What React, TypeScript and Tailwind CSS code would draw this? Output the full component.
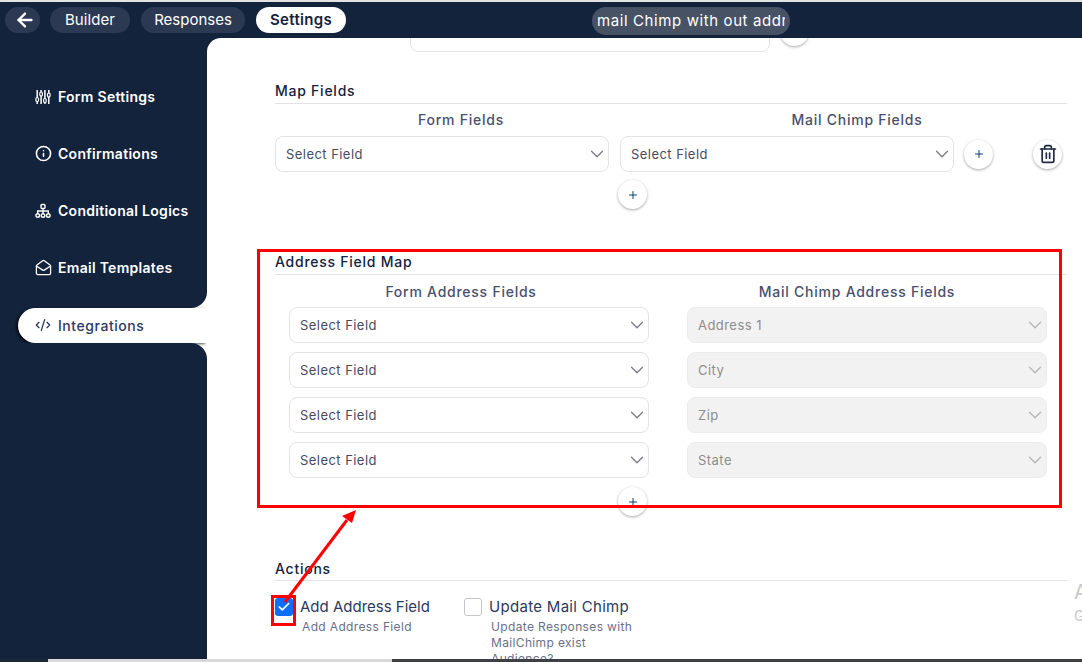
import { ArrowLeft, ChevronDown, Check, CodeXml, Info, MailOpen, Plus, Trash2 } from "lucide-react";

const font = "[font-family:Inter,'Liberation_Sans',sans-serif]";

function SlidersIcon() {
  return (
    <svg viewBox="0 0 16 16" className="h-[16px] w-[16px]" fill="none" stroke="currentColor" strokeWidth="1.5">
      <path d="M2.2 1v14M6.1 1v14M9.9 1v14M13.8 1v14" />
      <rect x="0.9" y="8.5" width="2.6" height="4" rx="1.3" fill="#14233c" strokeWidth="1.2" />
      <rect x="4.8" y="3" width="2.6" height="4" rx="1.3" fill="#14233c" strokeWidth="1.2" />
      <rect x="8.6" y="9.5" width="2.6" height="4" rx="1.3" fill="#14233c" strokeWidth="1.2" />
      <rect x="12.5" y="4" width="2.6" height="4" rx="1.3" fill="#14233c" strokeWidth="1.2" />
    </svg>
  );
}

function TreeIcon() {
  return (
    <svg viewBox="0 0 16 16" className="h-[16px] w-[16px]" fill="none" stroke="currentColor" strokeWidth="1.4">
      <rect x="6" y="1.5" width="4" height="4" rx="1" />
      <path d="M8 5.5v5M2.7 10.5V8h10.6v2.5" />
      <circle cx="2.7" cy="12.5" r="1.8" />
      <circle cx="8" cy="12.5" r="1.8" />
      <circle cx="13.3" cy="12.5" r="1.8" />
    </svg>
  );
}

function NavItem({ icon, label }: { icon: React.ReactNode; label: string }) {
  return (
    <div className="flex h-[57px] items-center gap-[7px] pl-[35px] text-[14px] font-semibold tracking-[0.28px] text-white">
      <span className="grid w-[16px] place-items-center">{icon}</span>
      {label}
    </div>
  );
}

function SelectBox({ label, disabled, className }: { label: string; disabled?: boolean; className?: string }) {
  return (
    <div
      className={`flex h-[36px] items-center justify-between rounded-[8px] border pl-[10px] text-[13px] tracking-[0.45px] ${
        disabled ? "border-[#ececec] bg-[#f2f2f2] text-[#8d8d8d]" : "border-[#e3e3e6] bg-white text-[#4a4a5e]"
      } ${className ?? ""}`}
    >
      <span className="pt-[2px]">{label}</span>
      <ChevronDown className={`h-[22px] w-[22px] ${disabled ? "text-[#b5b5b5]" : "text-[#7b7b85]"}`} strokeWidth={1.4} />
    </div>
  );
}

function RoundButton({ children, className }: { children: React.ReactNode; className?: string }) {
  return (
    <div className={`grid h-[29px] w-[29px] shrink-0 place-items-center rounded-full bg-white shadow-[0_1px_3px_rgba(0,0,0,0.35)] ${className ?? ""}`}>
      {children}
    </div>
  );
}

const plusIcon = <Plus className="h-[12px] w-[12px] text-[#0b3f6e]" strokeWidth={2} />;

function SectionTitle({ children }: { children: React.ReactNode }) {
  return (
    <h3 className="border-b border-[#e3e3e6] pb-[3px] text-[14px] leading-[18px] font-medium tracking-[0.75px] text-[#14233c]">
      {children}
    </h3>
  );
}

function ColumnTitles({ left, right }: { left: string; right: string }) {
  return (
    <div className="grid grid-cols-[372px_420px] text-center text-[14px] leading-[18px] font-medium tracking-[0.75px] text-[#4a4f6e]">
      <div>{left}</div>
      <div>{right}</div>
    </div>
  );
}

export default function App() {
  return (
    <div className={`relative flex h-[662px] w-[1082px] flex-col overflow-hidden bg-white ${font}`}>
      <div className="h-[2px] bg-[#e4e4e4]" />

      {/* top bar */}
      <header className="relative z-10 flex h-[36px] shrink-0 items-start bg-[#14233c] pt-[5px] pl-[5px] text-[15px]">
        <div className="grid h-[26px] w-[35px] place-items-center rounded-full bg-[#2b3a52] pl-[4px] text-white">
          <ArrowLeft className="h-[22px] w-[22px]" strokeWidth={2.6} />
        </div>
        <div className="ml-[10px] flex h-[26px] w-[80px] items-center justify-center rounded-full bg-[#2b3a52] tracking-[0.1px] text-white">Builder</div>
        <div className="ml-[11px] flex h-[26px] w-[104px] items-center justify-center rounded-full bg-[#2b3a52] tracking-[0px] text-white">Responses</div>
        <div className="ml-[11px] flex h-[26px] w-[90px] items-center justify-center rounded-full bg-white font-semibold tracking-[0.3px] text-[#14233c]">Settings</div>
        <div className="ml-[246px] flex h-[28px] w-[198px] items-center overflow-hidden rounded-full bg-[#475264] px-[5px] pt-[1px] text-[15px] tracking-[0.6px] whitespace-nowrap text-white">
          <span className="block overflow-hidden">mail Chimp with out address</span>
        </div>
      </header>

      <div className="flex min-h-0 flex-1">
        {/* sidebar */}
        <aside className="flex w-[207px] shrink-0 flex-col bg-white">
          <div className="h-[270px] rounded-br-[16px] bg-[#14233c] pt-[30px]">
            <NavItem icon={<SlidersIcon />} label="Form Settings" />
            <NavItem icon={<Info className="h-[17px] w-[17px]" strokeWidth={2.2} />} label="Confirmations" />
            <NavItem icon={<TreeIcon />} label="Conditional Logics" />
            <NavItem icon={<MailOpen className="h-[17px] w-[17px]" strokeWidth={1.8} />} label="Email Templates" />
          </div>
          <div className="bg-[#14233c] pl-[18px]">
            <div className="flex h-[35px] items-center gap-[7px] rounded-l-full bg-white pb-[1px] pl-[17px] text-[14px] font-medium tracking-[0.55px] text-[#2c3a5e] shadow-[-2px_1px_3px_rgba(0,0,0,0.7)]">
              <span className="grid w-[16px] place-items-center">
                <CodeXml className="h-[16px] w-[16px]" strokeWidth={2} />
              </span>
              Integrations
            </div>
          </div>
          <div className="flex-1 rounded-tr-[16px] bg-[#14233c]" />
        </aside>

        {/* main panel */}
        <div className="min-w-0 flex-1 bg-[#14233c]">
          <main className="h-full overflow-hidden rounded-tl-[14px] bg-white pr-[15px] pl-[68px]">
            <div className="-mt-[22px] flex items-start pl-[135px]">
              <div className="h-[36px] w-[360px] rounded-[8px] border border-[#e3e3e6] bg-white" />
              <RoundButton className="mt-[1px] ml-[10px]">{plusIcon}</RoundButton>
            </div>

            <section className="mt-[30px]">
              <SectionTitle>Map Fields</SectionTitle>
              <div className="mt-[7px]">
                <ColumnTitles left="Form Fields" right="Mail Chimp Fields" />
              </div>
              <div className="mt-[7px] flex items-center">
                <SelectBox label="Select Field" className="w-[334px]" />
                <SelectBox label="Select Field" className="ml-[11px] w-[334px]" />
                <RoundButton className="ml-[10px]">{plusIcon}</RoundButton>
                <RoundButton className="ml-[40px]">
                  <Trash2 className="h-[20px] w-[20px] text-[#1f2a44]" strokeWidth={2} />
                </RoundButton>
              </div>
              <div className="mt-[8px] pl-[343px]">
                <RoundButton>{plusIcon}</RoundButton>
              </div>
            </section>

            <section className="mt-[44px]">
              <SectionTitle>Address Field Map</SectionTitle>
              <div className="mt-[8px]">
                <ColumnTitles left="Form Address Fields" right="Mail Chimp Address Fields" />
              </div>
              <div className="mt-[6px] grid grid-cols-[360px_360px] gap-x-[38px] gap-y-[9px] pl-[14px]">
                <SelectBox label="Select Field" />
                <SelectBox label="Address 1" disabled />
                <SelectBox label="Select Field" />
                <SelectBox label="City" disabled />
                <SelectBox label="Select Field" />
                <SelectBox label="Zip" disabled />
                <SelectBox label="Select Field" />
                <SelectBox label="State" disabled />
              </div>
              <div className="mt-[9px] pl-[343px]">
                <RoundButton>{plusIcon}</RoundButton>
              </div>
            </section>

            <section className="mt-[44px]">
              <h3 className="border-b border-[#e3e3e6] pb-[2px] text-[14px] leading-[18px] font-medium tracking-[0.75px] text-[#14233c]">Actions</h3>
              <div className="mt-[17px] flex items-start">
                <div className="grid h-[18px] w-[18px] shrink-0 place-items-center rounded-[3px] bg-[#0d6efd]">
                  <Check className="h-[14px] w-[14px] text-white" strokeWidth={3} />
                </div>
                <div className="-mt-[1px] ml-[7px] w-[164px]">
                  <div className="text-[15px] leading-[20px] tracking-[0px] text-[#2c3a5e]">Add Address Field</div>
                  <div className="mt-[2px] pl-[2px] text-[12px] leading-[16px] tracking-[0.35px] text-[#6b6f8a]">Add Address Field</div>
                </div>
                <div className="h-[18px] w-[18px] shrink-0 rounded-[3px] border border-[#c4c6cc] bg-white" />
                <div className="-mt-[1px] ml-[7px] w-[180px]">
                  <div className="text-[15px] leading-[20px] tracking-[0.3px] text-[#2c3a5e]">Update Mail Chimp</div>
                  <div className="mt-[2px] pl-[2px] text-[12px] leading-[16px] tracking-[0.35px] text-[#6b6f8a]">
                    Update Responses with
                    <br />
                    MailChimp exist
                    <br />
                    Audience?
                  </div>
                </div>
              </div>
            </section>
          </main>
        </div>
      </div>

      <div className="relative z-10 flex h-[3px] shrink-0">
        <div className="w-[48px] bg-[#1a2735]" />
        <div className="w-[344px] bg-[#d9d9d9]" />
        <div className="flex-1 bg-[#3d4045]" />
      </div>

      {/* clipped text from a neighbouring column */}
      <div className="absolute top-[581px] left-[1074px] text-[20px] leading-[22px] text-[#c8c8c8]">A</div>
      <div className="absolute top-[607px] left-[1074px] text-[14px] leading-[18px] text-[#c8c8c8]">G</div>

      {/* red annotations */}
      <div className="pointer-events-none absolute top-[249px] left-[257px] h-[259px] w-[805px] border-[3px] border-[#ff0000]" />
      <div className="pointer-events-none absolute top-[595px] left-[271px] h-[31px] w-[25px] border-[3px] border-[#ff0000]" />
      <svg className="pointer-events-none absolute top-[505px] left-[280px] h-[100px] w-[85px]" viewBox="0 0 85 100">
        <path d="M5 97 L67 15" stroke="#ff0000" strokeWidth="3" />
        <path d="M76 5 L72 18 L62 11 Z" fill="#ff0000" />
      </svg>
    </div>
  );
}
